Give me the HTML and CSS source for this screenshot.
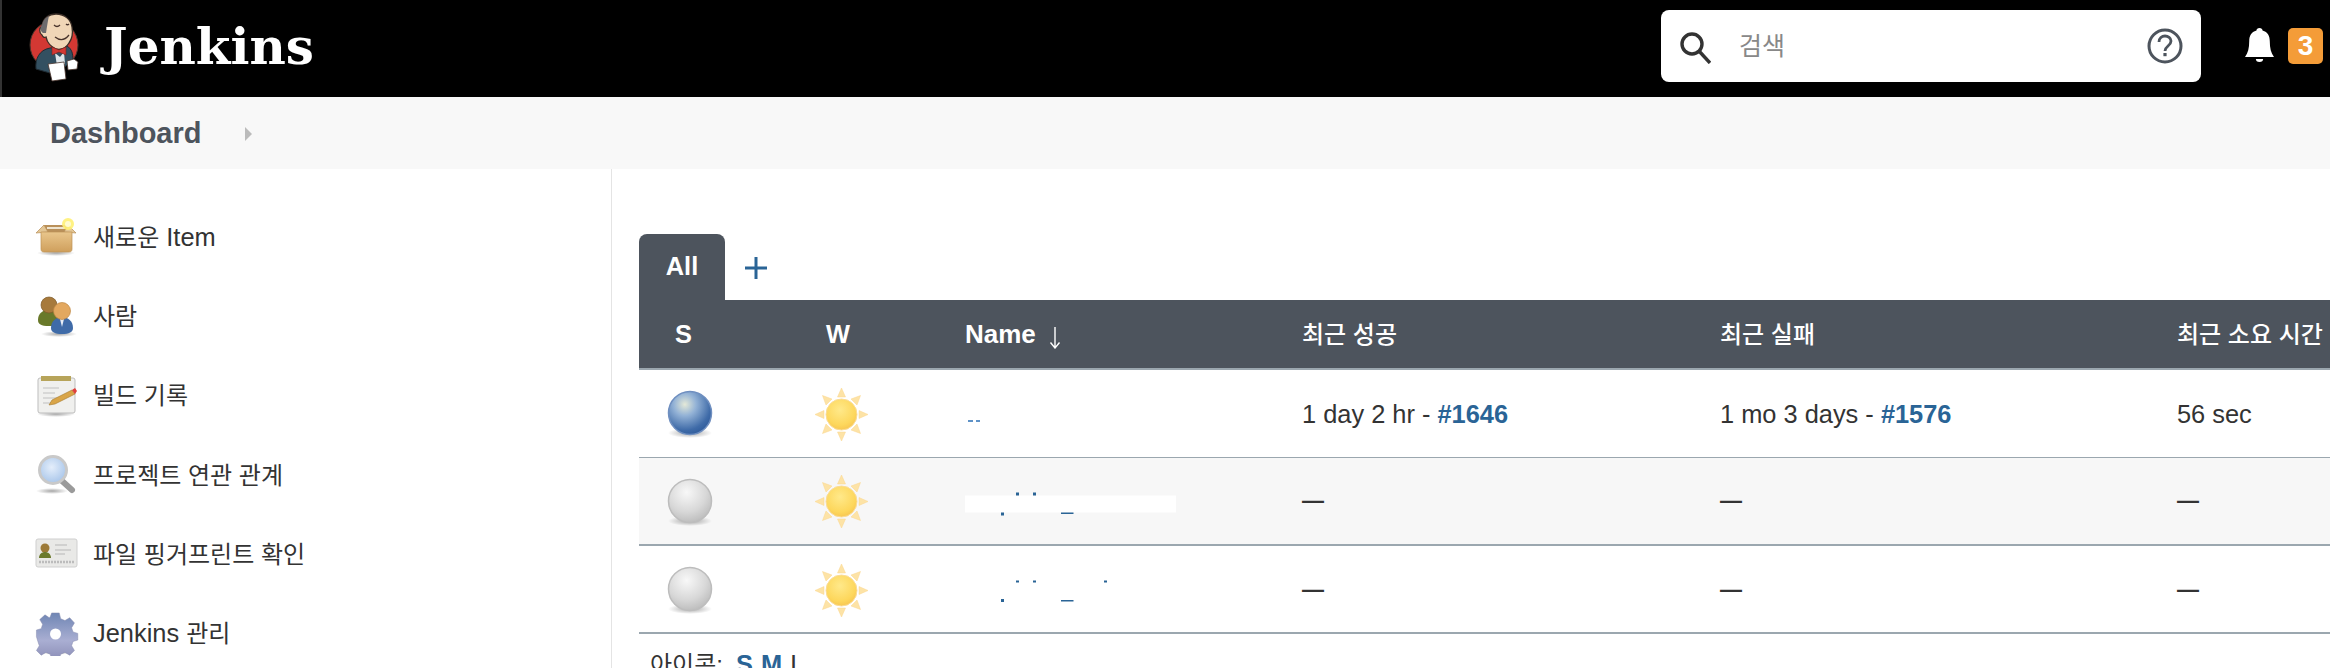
FILE: index.html
```html
<!DOCTYPE html>
<html lang="ko">
<head>
<meta charset="utf-8">
<title>Dashboard [Jenkins]</title>
<link rel="stylesheet" href="styles.css">
</head>
<body>
<svg class="defs" width="0" height="0" aria-hidden="true">
  <defs>
    <radialGradient id="ballBlue" cx="0.38" cy="0.3" r="0.75">
      <stop offset="0" stop-color="#e4e9d8"/><stop offset="0.35" stop-color="#93b2d6"/><stop offset="0.8" stop-color="#3f6ba8"/><stop offset="1" stop-color="#2f5b9b"/>
    </radialGradient>
    <radialGradient id="ballGrey" cx="0.42" cy="0.3" r="0.75">
      <stop offset="0" stop-color="#f8f8f8"/><stop offset="0.6" stop-color="#d8d8d8"/><stop offset="1" stop-color="#b9b9b9"/>
    </radialGradient>
    <radialGradient id="shade" cx="0.5" cy="0.5" r="0.5">
      <stop offset="0" stop-color="#000" stop-opacity="0.35"/><stop offset="1" stop-color="#000" stop-opacity="0"/>
    </radialGradient>
    <radialGradient id="sunCore" cx="0.45" cy="0.35" r="0.7">
      <stop offset="0" stop-color="#ffe98a"/><stop offset="0.7" stop-color="#fdd75c"/><stop offset="1" stop-color="#f6c24e"/>
    </radialGradient>
    <linearGradient id="box" x1="0" y1="0" x2="0" y2="1">
      <stop offset="0" stop-color="#e9c68c"/><stop offset="1" stop-color="#cf9f5c"/>
    </linearGradient>
    <radialGradient id="lens" cx="0.45" cy="0.4" r="0.6">
      <stop offset="0" stop-color="#e4eefb"/><stop offset="1" stop-color="#a9c6ea"/>
    </radialGradient>
    <linearGradient id="gear" x1="0" y1="0" x2="0" y2="1">
      <stop offset="0" stop-color="#6f86b4"/><stop offset="0.6" stop-color="#a9aed2"/><stop offset="1" stop-color="#8d8fb8"/>
    </linearGradient>
    <g id="sun">
      <g fill="#fde3a6" stroke="#fbd78f" stroke-width="0.5">
        <path d="M26.5 0l4 9h-8zM26.5 53l4-9h-8zM0 26.500l9-4v8zM53 26.500l-9-4v8z"/>
        <path d="M7.500 7.500l9.500 3.500-6 6zM45.500 7.500l-9.500 3.500 6 6zM7.500 45.500l9.500-3.500-6-6zM45.500 45.500l-9.500-3.500 6-6z"/>
      </g>
      <circle cx="26.500" cy="26.500" r="15.500" fill="url(#sunCore)" stroke="#fbdc95" stroke-width="1"/>
    </g>
    <g id="ballG">
      <ellipse cx="23" cy="43" rx="22" ry="5" fill="url(#shade)"/>
      <circle cx="23" cy="23" r="21.500" fill="url(#ballGrey)" stroke="#bdbdbd" stroke-width="1.500"/>
    </g>
  </defs>
</svg>

<header class="topbar">
  <a class="brand" href="#">
    <svg class="brand-mark" width="56" height="74" viewBox="0 0 56 74">
      <circle cx="27" cy="36" r="24" fill="#d33833" stroke="#49342c" stroke-width="1"/>
      <path d="M9 60c-1-10 3-19 14-21l17-2c5 3 6 8 6 14l-7 6-16 7z" fill="#335061" stroke="#1f2b33"/>
      <path d="M28 44l5 4 4-5 1 12-8 2z" fill="#dfe6ea"/>
      <path d="M15 26c-3-2-3-7 0-9 1-8 7-12 14-12 9 0 15 6 16 13 1 6 0 12-3 16-3 5-8 7-13 6-5-2-9-7-10-12-2 1-3 0-4-2z" fill="#f0d6b7" stroke="#3a2d26" stroke-width="1.300"/>
      <path d="M16 24c-3-2-3-6-1-8 1-5 4-8 7-9-1 4-2 10-3 17z" fill="#6d6b6d"/>
      <path d="M27 16c2 2 4 2 6 0M39 15c1 1 2 1 3 0M28 28c5 4 10 3 14-2" fill="none" stroke="#49342c" stroke-width="1.300"/>
      <path d="M25 38l7 3 7-3v8l-7-3-7 3z" fill="#d33833" stroke="#7d2320" stroke-width="0.600"/>
      <path d="M21 55l16-2 2 17-14 2z" fill="#fff" stroke="#49342c" stroke-width="0.800"/>
      <path d="M40 52l7-2 4 3-1 7-9 1z" fill="#fff" stroke="#49342c" stroke-width="0.800"/>
    </svg>
    <span class="brand-name">Jenkins</span>
  </a>
  <div class="top-right">
    <form class="search">
      <svg class="search-icon" width="31" height="32" viewBox="0 0 31 32">
        <circle cx="12" cy="12" r="10" fill="none" stroke="#333" stroke-width="3.400"/>
        <path d="M19 19l11 12" stroke="#333" stroke-width="3.400" fill="none"/>
      </svg>
      <span class="search-hint">검색</span>
      <svg class="help-icon" width="36" height="36" viewBox="0 0 36 36">
        <circle cx="18" cy="18" r="16" fill="none" stroke="#4d545d" stroke-width="3"/>
        <path d="M12 14c0-4 3-6 6-6s6 2 6 5c0 5-6 5-6 10" fill="none" stroke="#4d545d" stroke-width="2.800"/>
        <rect x="16.400" y="25" width="3.200" height="3.200" fill="#4d545d"/>
      </svg>
    </form>
    <svg class="bell" width="29" height="36" viewBox="0 0 24 36" preserveAspectRatio="none">
      <path d="M12 0c1.500 0 2.500 1 2.500 2.500C19 4 20.500 8 20.500 13c0 7 1 12 3.500 16H0c2.500-4 3.500-9 3.500-16C3.500 8 5 4 9.500 2.500 9.500 1 10.500 0 12 0z" fill="#fff"/>
      <path d="M9 31h6c0 2-1 3-3 3s-3-1-3-3z" fill="#fff"/>
    </svg>
    <span class="badge">3</span>
  </div>
</header>

<nav class="crumbs">
  <a class="crumb" href="#">Dashboard</a>
  <span class="crumb-arrow"></span>
</nav>

<div class="layout">
  <aside class="side">
    <a class="task" href="#">
      <svg class="task-icon" width="44" height="40" viewBox="0 0 44 40">
        <ellipse cx="21" cy="35" rx="19" ry="3" fill="url(#shade)"/>
        <path d="M5 14l4-7h24l5 7z" fill="#b9905a"/>
        <path d="M1 15l8-8 4 7zM41 15l-8-8-4 7z" fill="#e3c695" stroke="#b98f58" stroke-width="0.700"/>
        <path d="M6 14h31v17c0 2-1 3-3 3H9c-2 0-3-1-3-3z" fill="url(#box)" stroke="#bd9258" stroke-width="0.700"/>
        <path d="M12 10h18" stroke="#efe5d0" stroke-width="2"/>
        <circle cx="33" cy="6" r="6" fill="#fff176" opacity="0.9"/>
        <circle cx="33" cy="6" r="3" fill="#fffbd0"/>
      </svg>
      <span><span class="ko">새로운</span> Item</span>
    </a>
    <a class="task" href="#">
      <svg class="task-icon" width="44" height="42" viewBox="0 0 44 42">
        <ellipse cx="24" cy="38" rx="18" ry="3" fill="url(#shade)"/>
        <path d="M3 24c0-7 5-10 11-10s11 3 11 10c0 4-3 6-11 6S3 28 3 24z" fill="#69792a"/>
        <circle cx="14" cy="9" r="8" fill="#a77a3c" stroke="#7d5a2a" stroke-width="0.700"/>
        <path d="M16 32c0-7 5-11 11-11s11 4 11 11c0 4-4 6-11 6s-11-2-11-6z" fill="#3f6ba8"/>
        <path d="M25 23h4l-2 8z" fill="#e8edf5"/>
        <circle cx="27" cy="15" r="8.500" fill="#e3a85f" stroke="#bd8643" stroke-width="0.700"/>
      </svg>
      <span class="ko">사람</span>
    </a>
    <a class="task" href="#">
      <svg class="task-icon" width="44" height="42" viewBox="0 0 44 42">
        <ellipse cx="21" cy="39" rx="19" ry="3" fill="url(#shade)"/>
        <rect x="3" y="3" width="37" height="35" rx="2" fill="#f0f0ee" stroke="#bdbdbd"/>
        <rect x="6" y="1" width="30" height="5" fill="#b7a45a"/>
        <path d="M8 13h16M8 18h12M8 23h16M8 28h8" stroke="#cfcfcf" stroke-width="1.500"/>
        <path d="M14 30l3-5 20-10 3 4-20 10z" fill="#d9a548" stroke="#a67a2b" stroke-width="0.600"/>
        <path d="M37 15l3 4 2-3-2-3z" fill="#e0403c"/>
      </svg>
      <span class="ko">빌드 기록</span>
    </a>
    <a class="task" href="#">
      <svg class="task-icon" width="44" height="42" viewBox="0 0 44 42">
        <ellipse cx="17" cy="37" rx="16" ry="3" fill="url(#shade)"/>
        <path d="M26 26l11 10" stroke="#9a9a9a" stroke-width="6" stroke-linecap="round"/>
        <circle cx="18" cy="16" r="13.500" fill="url(#lens)" stroke="#c9c9c9" stroke-width="3"/>
      </svg>
      <span class="ko">프로젝트 연관 관계</span>
    </a>
    <a class="task" href="#">
      <svg class="task-icon" width="44" height="32" viewBox="0 0 44 32">
        <rect x="1" y="1" width="41" height="28" rx="2" fill="#e9e9e7" stroke="#cfcfcf"/>
        <circle cx="10" cy="10" r="4.500" fill="#9c7a38"/>
        <path d="M4 20c0-4 3-6 6-6s6 2 6 6z" fill="#6b7a2c"/>
        <path d="M20 7h12M20 12h16M20 16h10" stroke="#c8c8c8" stroke-width="1.300"/>
        <path d="M4 24h35" stroke="#bcbcbc" stroke-width="2.500" stroke-dasharray="2 1"/>
      </svg>
      <span class="ko">파일 핑거프린트 확인</span>
    </a>
    <a class="task" href="#">
      <svg class="task-icon" width="44" height="44" viewBox="0 0 44 44">
        <ellipse cx="21" cy="40" rx="17" ry="3" fill="url(#shade)"/>
        <path d="M17 1h8l1.500 6 4.500 2 5-3 5 5.500-3 5 1.500 4.500 5 1.500v7l-5 1.500-1.500 4.500 3 5-5 5-5-3-4.500 2-1.500 5h-8l-1.500-5-4.500-2-5 3-5-5 3-5-1.500-4.500L1 26v-7l5-1.500L7.500 13l-3-5L10 3l4.500 3 1-1z" fill="url(#gear)" stroke="#8488ad" stroke-width="0.500" transform="translate(0.500 0) scale(0.95)"/>
        <circle cx="20.500" cy="22" r="5.500" fill="#fff"/>
      </svg>
      <span>Jenkins <span class="ko">관리</span></span>
    </a>
  </aside>

  <main class="main">
    <div class="tabs">
      <a class="tab" href="#">All</a>
      <a class="tab-add" href="#" aria-label="add view">
        <svg width="22" height="22" viewBox="0 0 22 22"><path d="M11 0v22M0 11h22" stroke="#2a6496" stroke-width="3"/></svg>
      </a>
    </div>
    <table class="jobs">
      <colgroup>
        <col class="c-s"><col class="c-w"><col class="c-name"><col class="c-ok"><col class="c-fail"><col class="c-dur">
      </colgroup>
      <thead>
        <tr>
          <th class="h-s">S</th>
          <th class="h-w">W</th>
          <th class="h-name">Name<svg class="sort" width="12" height="22" viewBox="0 0 12 22"><path d="M6 0v21M1.500 15.500L6 21l4.500-5.500" fill="none" stroke="#fff" stroke-width="1.400"/></svg></th>
          <th class="ko">최근 성공</th>
          <th class="ko">최근 실패</th>
          <th class="ko">최근 소요 시간</th>
        </tr>
      </thead>
      <tbody>
        <tr class="first">
          <td class="d-s"><svg class="status" width="46" height="48" viewBox="0 0 46 48"><ellipse cx="23" cy="43" rx="22" ry="5" fill="url(#shade)"/><circle cx="23" cy="23" r="21.500" fill="url(#ballBlue)" stroke="#6f8fc0" stroke-width="1.500"/></svg></td>
          <td class="d-w"><svg class="status" width="53" height="53" viewBox="0 0 53 53"><use href="#sun"/></svg></td>
          <td><svg class="marks" width="212" height="30" viewBox="0 0 212 30"><path d="M3 22h5M11 22h4" stroke="#2a6fb5" stroke-width="1.500"/></svg></td>
          <td>1 day 2 hr - <a class="build" href="#">#1646</a></td>
          <td>1 mo 3 days - <a class="build" href="#">#1576</a></td>
          <td>56 sec</td>
        </tr>
        <tr class="alt">
          <td class="d-s"><svg class="status" width="46" height="48" viewBox="0 0 46 48"><use href="#ballG"/></svg></td>
          <td class="d-w"><svg class="status" width="53" height="53" viewBox="0 0 53 53"><use href="#sun"/></svg></td>
          <td><svg class="marks" width="212" height="30" viewBox="0 0 212 30"><rect width="211" height="17" y="8.500" fill="#fff"/><path d="M51 5.500h3v3h-3zM68 5.500h3v3h-3zM36 25.500h3v3h-3zM96 25.500h12.500v1.500H96z" fill="#2a6496"/></svg></td>
          <td class="none">—</td>
          <td class="none">—</td>
          <td class="none">—</td>
        </tr>
        <tr>
          <td class="d-s"><svg class="status" width="46" height="48" viewBox="0 0 46 48"><use href="#ballG"/></svg></td>
          <td class="d-w"><svg class="status" width="53" height="53" viewBox="0 0 53 53"><use href="#sun"/></svg></td>
          <td><svg class="marks" width="212" height="30" viewBox="0 0 212 30"><path d="M51 5.500h3v2h-3zM68 5.500h3v2h-3zM139 5.500h3v2h-3zM36 24h3v3h-3zM96 25h12.500v1.500H96z" fill="#2a6496"/></svg></td>
          <td class="none">—</td>
          <td class="none">—</td>
          <td class="none">—</td>
        </tr>
      </tbody>
    </table>
    <p class="sizes"><span class="ko">아이콘:</span> <a class="size size-first" href="#">S</a> <a class="size" href="#">M</a> <span>L</span></p>
  </main>
</div>
</body>
</html>
```

FILE: styles.css
```css
* { box-sizing: border-box; }
html, body { margin: 0; height: 668px; overflow: hidden; background: #fff; }
body { font: 25.4px/1.3 "Liberation Sans", "Noto Sans CJK KR", sans-serif; color: #333; }
a { color: inherit; text-decoration: none; }
.defs { display: block; height: 0; }
.ko { font-size: 24px; }

.topbar {
  height: 97px; background: #000; border-left: 2px solid #333;
  display: flex; align-items: center; justify-content: space-between;
  padding-right: 7px;
}
.brand { display: flex; align-items: center; padding-left: 25px; }
.brand-mark { display: block; margin-top: -6px; }
.brand-name {
  margin-left: 21px; margin-top: -4px; color: #fff;
  font: bold 50px/1 "DejaVu Serif", serif;
}
.top-right { display: flex; align-items: center; margin-top: -5px; }
.search {
  width: 540px; height: 72px; background: #fff; border-radius: 8px;
  display: flex; align-items: center; padding: 0 18px 0 19px;
}
.search-icon { display: block; margin-top: 4px; }
.search-hint { margin-left: 28px; color: #888; flex: 1; font-size: 25px; }
.help-icon { display: block; }
.bell { display: block; margin-left: 44px; }
.badge {
  width: 35px; height: 36px; margin-left: 14px; border-radius: 5px;
  background: #f49c38; color: #fff; font-weight: bold; font-size: 28px; line-height: 36px; text-align: center;
}

.crumbs { height: 72px; background: #f8f8f8; display: flex; align-items: center; padding: 2px 0 0 50px; }
.crumb { font-weight: bold; font-size: 29px; color: #4d545d; }
.crumb-arrow {
  margin-left: 44px; width: 0; height: 0;
  border-left: 7px solid #bbb; border-top: 7px solid transparent; border-bottom: 7px solid transparent;
}

.layout { display: grid; grid-template-columns: 612px 1fr; height: 499px; }
.side { border-right: 1px solid #e4e4e4; padding: 29px 0 0 35px; }
.task { display: flex; align-items: center; height: 79.2px; color: #333; }
.task-icon { display: block; flex: none; margin-right: 14px; }

.main { padding: 65px 0 0 27px; min-width: 0; }
.tabs { display: flex; align-items: center; height: 66px; }
.tab {
  width: 86px; height: 66px; background: #4d545d; color: #fff; font-weight: bold;
  border-radius: 8px 8px 0 0; display: flex; align-items: center; justify-content: center;
}
.tab-add { display: block; margin-left: 20px; margin-top: 2px; line-height: 0; }

.jobs { width: 1691px; table-layout: fixed; border-collapse: collapse; }
.c-s { width: 150px; } .c-w { width: 158px; } .c-name { width: 337px; }
.c-ok { width: 418px; } .c-fail { width: 457px; } .c-dur { width: 171px; }
.jobs th {
  height: 69px; background: #4d545d; color: #fff; font-weight: bold; text-align: left;
  padding: 2px 0 0 18px; border-bottom: 2px solid #9ba7af; white-space: nowrap;
}
.jobs th.ko { font-size: 24px; font-weight: 500; }
.jobs th.h-s { padding-left: 36px; }
.jobs th.h-w { padding-left: 37px; }
.jobs th.h-name { font-size: 26px; }
.sort { margin-left: 13px; vertical-align: -6px; }
.jobs td { height: 88px; padding: 2px 0 0 18px; border-bottom: 2px solid #9ba7af; white-space: nowrap; }
.first td { border-bottom-width: 1px; }
.jobs td.d-s { padding-left: 28px; }
.jobs td.d-w { padding-left: 26px; }
.jobs td.none { font-size: 22px; font-weight: bold; }
.alt td { background: #f7f7f7; }
.status, .marks { display: block; }
.build { color: #2a6496; font-weight: bold; }
.sizes { margin: 14px 0 0 11px; word-spacing: 1px; }
.size { color: #2a6496; font-weight: bold; }
.size-first { margin-left: 5px; }
```
